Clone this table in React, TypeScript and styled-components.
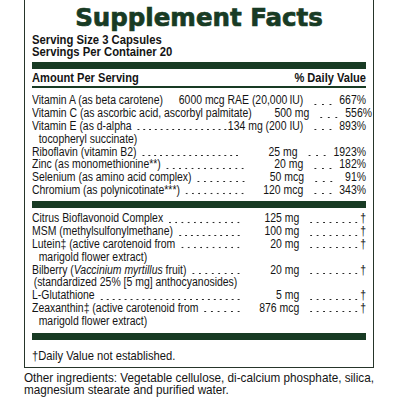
import React from "react";
import styled, { createGlobalStyle } from "styled-components";

const GREEN = "#183b24";
const INK = "#141414";
const S = 0.835;
const BODY_FONT = `"Liberation Sans", Arial, sans-serif`;

const GlobalStyle = createGlobalStyle`
  html, body { margin: 0; padding: 0; background: #ffffff; }
  body { font-family: ${BODY_FONT}; color: ${INK}; }
`;

const Page = styled.div`
  width: 400px;
  height: 400px;
  padding: 0 26px 0 24px;
  box-sizing: border-box;
  overflow: hidden;
`;

const Panel = styled.section`
  border: 1px solid #26352a;
  border-top: none;
  padding: 0 7px 5px 7px;
`;

/* Condensed type: Arial metrics squeezed horizontally, like Helvetica Condensed */
const Narrow = styled.div<{ $w: number; $s: number }>`
  width: ${(p) => p.$w / p.$s}px;
  margin-right: ${(p) => p.$w - p.$w / p.$s}px;
  transform: scaleX(${(p) => p.$s});
  transform-origin: left top;
`;

const Title = styled.h1`
  margin: 0;
  padding-top: 4px;
  font-family: "DejaVu Sans", "Liberation Sans", sans-serif;
  font-weight: 700;
  font-size: 24.5px;
  line-height: 28px;
  color: ${GREEN};
  -webkit-text-stroke: 0.7px ${GREEN};
  text-align: center;
`;

const Serving = styled.div`
  font-weight: 700;
  font-size: 13.5px;
  line-height: 12px;
  padding-top: 1.5px;
`;

const ThickBar = styled.div<{ $top: number; $bottom: number }>`
  height: 7px;
  background: ${GREEN};
  margin: ${(p) => p.$top}px 0 ${(p) => p.$bottom}px;
`;

const HeaderRow = styled.div`
  display: flex;
  justify-content: space-between;
  font-weight: 700;
  font-size: 13.3px;
  line-height: 13px;
  padding-bottom: 1.7px;
  border-bottom: 2px solid ${GREEN};
  margin-bottom: 6.5px;
`;

const Group = styled.div`
  font-size: 12.5px;
  line-height: 12.8px;
`;

const Row = styled.div`
  display: flex;
  align-items: baseline;
  white-space: nowrap;
`;

const Name = styled.span`
  flex: none;
`;

const dotFill = `
  background-image: radial-gradient(circle, #2a2a2a 0.8px, transparent 1.05px);
  background-size: ${5.8 / S}px 3px;
  background-repeat: space no-repeat;
  background-clip: content-box;
  background-origin: content-box;
  box-sizing: border-box;
`;

const Leader = styled.span<{ $dotted?: boolean; $tight?: boolean }>`
  flex: 1;
  align-self: stretch;
  margin: 0 ${(p) => (p.$tight ? 0 : p.$dotted ? 9 : 4)}px 0 5px;
  ${(p) => (p.$dotted ? dotFill : "")}
  background-position: right 0 top 8.4px;
`;

const Amount = styled.span<{ $min: number }>`
  flex: none;
  min-width: ${(p) => p.$min}px;
  text-align: right;
`;

const Dots = styled.span<{ $w: number; $pl: number; $pr: number }>`
  flex: none;
  width: ${(p) => p.$w}px;
  align-self: stretch;
  ${dotFill}
  background-position: right 0 top 8.4px;
  padding: 0 ${(p) => p.$pr}px 0 ${(p) => p.$pl}px;
`;

const DV = styled.span<{ $w: number }>`
  flex: none;
  min-width: ${(p) => p.$w}px;
  text-align: right;
`;

const Cont = styled.div<{ $indent: number }>`
  padding-left: ${(p) => p.$indent}px;
  white-space: nowrap;
`;

const Footnote = styled.div`
  font-size: 13.4px;
  line-height: 13px;
  padding-top: 9px;
`;

const Other = styled.p`
  margin: 4px 0 0;
  font-size: 13px;
  line-height: 12px;
`;

type Item = {
  name: React.ReactNode;
  leader: boolean;
  tight?: boolean;
  amount: string;
  dv: string;
  cont?: React.ReactNode;
  indent?: number;
};

const vitamins: Item[] = [
  { name: "Vitamin A (as beta carotene)", leader: false, amount: "6000 mcg RAE (20,000\u2009IU)", dv: "667%" },
  { name: "Vitamin C (as ascorbic acid, ascorbyl palmitate)", leader: false, amount: "500 mg", dv: "556%" },
  {
    name: "Vitamin E (as d-alpha",
    leader: true,
    tight: true,
    amount: "134 mg (200 IU)",
    dv: "893%",
    cont: "tocopheryl succinate)",
    indent: 8,
  },
  { name: "Riboflavin (vitamin B2)", leader: true, amount: "25 mg", dv: "1923%" },
  { name: "Zinc (as monomethionine**)", leader: true, amount: "20 mg", dv: "182%" },
  { name: "Selenium (as amino acid complex)", leader: true, amount: "50 mcg", dv: "91%" },
  { name: "Chromium (as polynicotinate***)", leader: true, amount: "120 mcg", dv: "343%" },
];

const others: Item[] = [
  { name: "Citrus Bioflavonoid Complex", leader: true, amount: "125 mg", dv: "\u2020" },
  { name: "MSM (methylsulfonylmethane)", leader: true, amount: "100 mg", dv: "\u2020" },
  {
    name: "Lutein\u2021 (active carotenoid from",
    leader: true,
    amount: "20 mg",
    dv: "\u2020",
    cont: "marigold flower extract)",
    indent: 8,
  },
  {
    name: (
      <>
        Bilberry (<i>Vaccinium myrtillus</i> fruit)
      </>
    ),
    leader: true,
    amount: "20 mg",
    dv: "\u2020",
    cont: "(standardized 25% [5 mg] anthocyanosides)",
    indent: 2,
  },
  { name: "L-Glutathione", leader: true, amount: "5 mg", dv: "\u2020" },
  {
    name: "Zeaxanthin\u2021 (active carotenoid from",
    leader: true,
    amount: "876 mcg",
    dv: "\u2020",
    cont: "marigold flower extract)",
    indent: 8,
  },
];

type RowsProps = {
  items: Item[];
  dotsW: number;
  dotsPl: number;
  dotsPr: number;
  dvW: number;
  amtMin: number;
};

function Rows({ items, dotsW, dotsPl, dotsPr, dvW, amtMin }: RowsProps) {
  return (
    <Group>
      {items.map((it, i) => (
        <React.Fragment key={i}>
          <Row>
            <Name>{it.name}</Name>
            <Leader $dotted={it.leader} $tight={it.tight} />
            <Amount $min={amtMin}>{it.amount}</Amount>
            <Dots $w={dotsW} $pl={dotsPl} $pr={dotsPr} />
            <DV $w={dvW}>{it.dv}</DV>
          </Row>
          {it.cont && <Cont $indent={it.indent ?? 8}>{it.cont}</Cont>}
        </React.Fragment>
      ))}
    </Group>
  );
}

export default function App() {
  return (
    <Page>
      <GlobalStyle />
      <Panel>
        <Title>Supplement Facts</Title>
        <Narrow $w={334} $s={S}>
          <Serving>
            Serving Size 3 Capsules
            <br />
            Servings Per Container 20
          </Serving>
          <ThickBar $top={4.5} $bottom={2.3} />
          <HeaderRow>
            <span>Amount Per Serving</span>
            <span>% Daily Value</span>
          </HeaderRow>
          <Rows items={vitamins} dotsW={36 / S} dotsPl={9 / S} dotsPr={6 / S} dvW={26 / S} amtMin={60} />
          <ThickBar $top={4} $bottom={4.5} />
          <Rows items={others} dotsW={61 / S} dotsPl={9 / S} dotsPr={1 / S} dvW={5 / S} amtMin={60} />
          <ThickBar $top={5} $bottom={0} />
          <Footnote>{"\u2020"}Daily Value not established.</Footnote>
        </Narrow>
      </Panel>
      <Narrow $w={350} $s={0.9}>
        <Other>
          Other ingredients: Vegetable cellulose, di-calcium phosphate, silica,
          <br />
          magnesium stearate and purified water.
        </Other>
      </Narrow>
    </Page>
  );
}
